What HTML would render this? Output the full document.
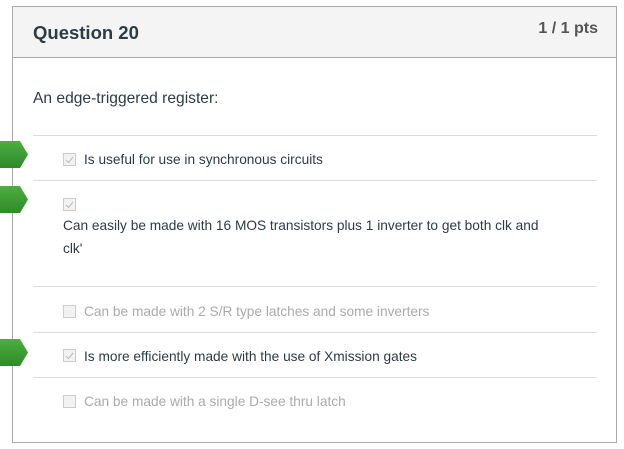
<!DOCTYPE html>
<html><head><style>
body{margin:0;background:#fff;width:624px;height:449px;overflow:hidden;position:relative;font-family:"Liberation Sans",sans-serif;}
.box{position:absolute;left:12px;top:6px;width:603px;height:435px;border:1px solid #aaa;}
.hdr{position:absolute;left:0;top:0;right:0;height:50px;background:#f4f4f4;border-bottom:1px solid #aaa;}
.q{position:absolute;left:20px;top:15px;font-size:18.5px;font-weight:bold;color:#2d3b45;}
.pts{position:absolute;right:18px;top:13px;font-size:16px;font-weight:bold;color:#555;}
.prompt{position:absolute;left:33px;top:90px;font-size:15.6px;color:#2d3b45;}
.line{position:absolute;left:33px;width:564px;height:1px;background:#ddd;}
.cb{position:absolute;left:63px;width:11px;height:11px;border:1px solid #ccc;background:#f2f2f2;}
.cb svg{position:absolute;left:1px;top:1px;}
.t{position:absolute;left:84px;font-size:13.7px;color:#2d3b45;white-space:nowrap;}
.g{color:#aaa;}
.arr{position:absolute;left:0;}
</style></head><body>
<div class="box"><div class="hdr"><div class="q">Question 20</div><div class="pts">1 / 1 pts</div></div></div>
<div class="prompt">An edge-triggered register:</div>
<div class="line" style="top:135px"></div>
<div class="line" style="top:180px"></div>
<div class="line" style="top:286px"></div>
<div class="line" style="top:332px"></div>
<div class="line" style="top:377px"></div>
<svg class="arr" style="top:141px" width="29" height="27"><defs><linearGradient id="g" x1="0" y1="0" x2="0" y2="1"><stop offset="0" stop-color="#4caf3f"/><stop offset="1" stop-color="#2f8a2a"/></linearGradient></defs><path d="M0 0H20L28 13.5L20 27H0Z" fill="url(#g)"/></svg>
<svg class="arr" style="top:186px" width="29" height="27"><path d="M0 0H20L28 13.5L20 27H0Z" fill="url(#g)"/></svg>
<svg class="arr" style="top:339px" width="29" height="27"><path d="M0 0H20L28 13.5L20 27H0Z" fill="url(#g)"/></svg>
<div class="cb" style="top:153px"><svg width="9" height="9"><path d="M1 5L3.5 7.5L8 2" stroke="#bbb" fill="none"/></svg></div>
<div class="t" style="top:152px">Is useful for use in synchronous circuits</div>
<div class="cb" style="top:198px"><svg width="9" height="9"><path d="M1 5L3.5 7.5L8 2" stroke="#bbb" fill="none"/></svg></div>
<div class="t" style="top:214px;left:63px;line-height:23px">Can easily be made with 16 MOS transistors plus 1 inverter to get both clk and<br>clk'</div>
<div class="cb" style="top:305px"></div>
<div class="t g" style="top:304px">Can be made with 2 S/R type latches and some inverters</div>
<div class="cb" style="top:349px"><svg width="9" height="9"><path d="M1 5L3.5 7.5L8 2" stroke="#bbb" fill="none"/></svg></div>
<div class="t" style="top:349px">Is more efficiently made with the use of Xmission gates</div>
<div class="cb" style="top:395px"></div>
<div class="t g" style="top:394px">Can be made with a single D-see thru latch</div>
</body></html>
